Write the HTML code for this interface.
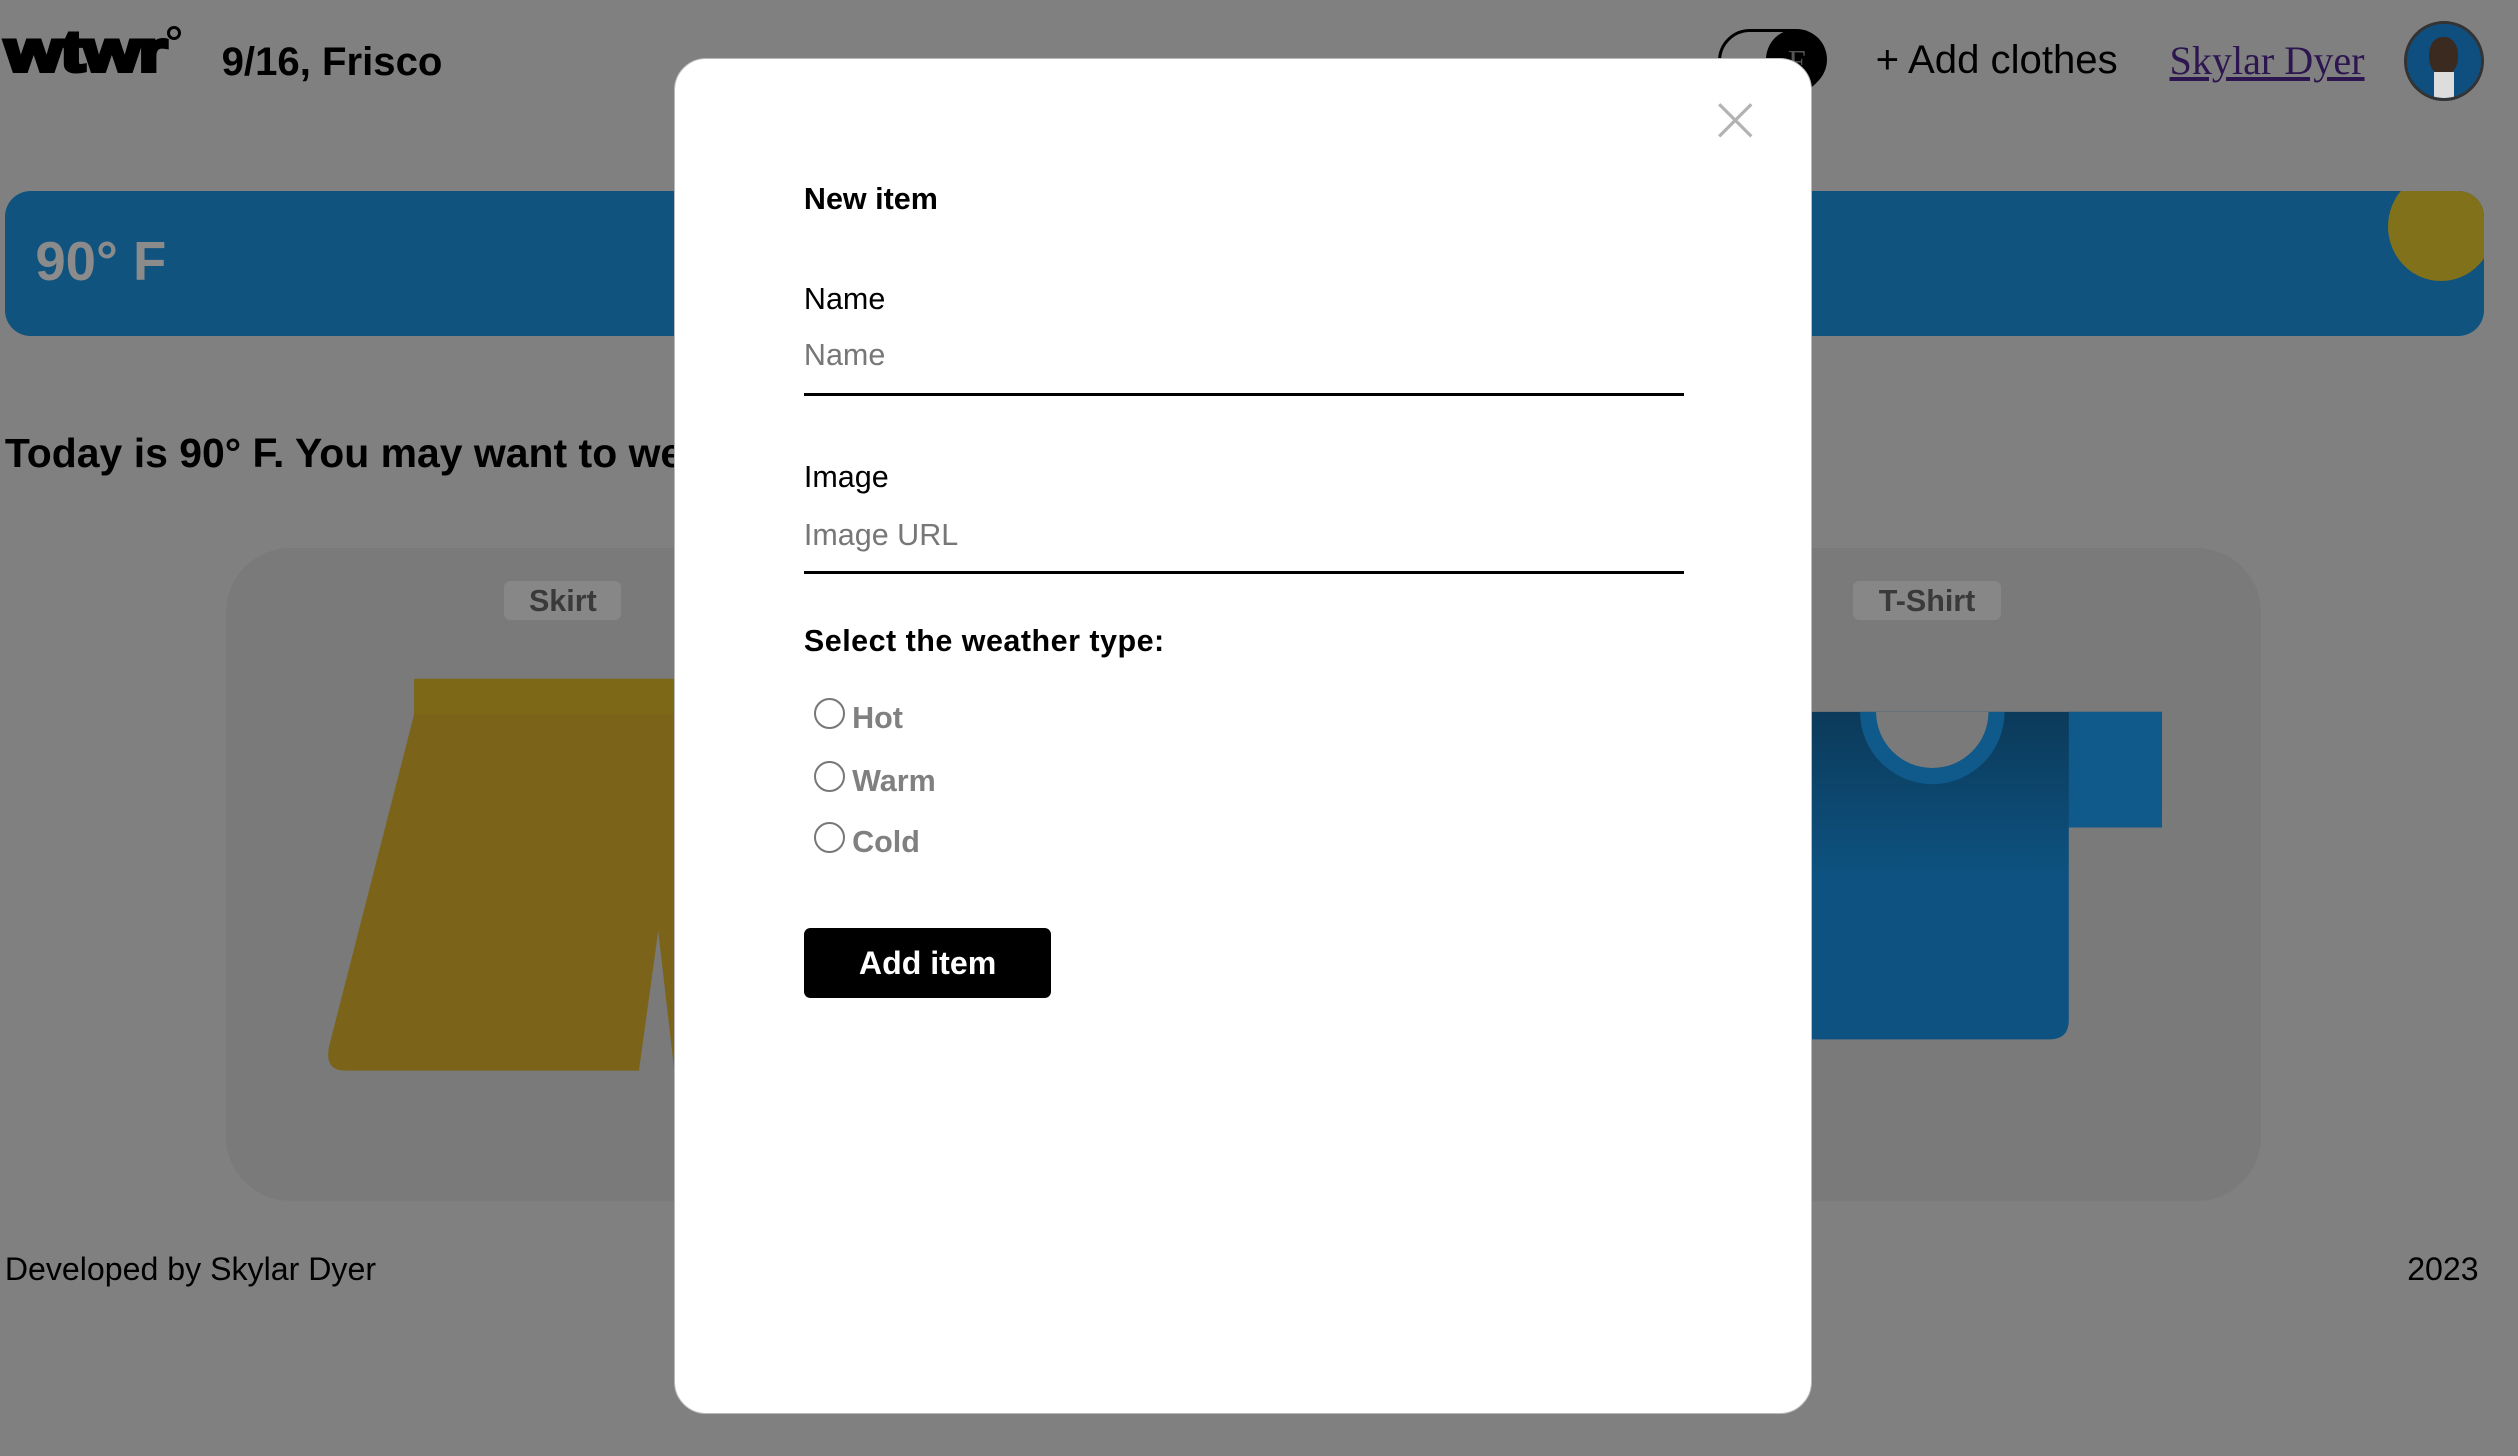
<!DOCTYPE html>
<html><head><meta charset="utf-8"><style>
html,body{margin:0;padding:0;background:#808080;overflow:hidden;width:2518px;height:1456px}
#w{zoom:1.60587;width:1568px;height:907px;position:relative;font-family:"Liberation Sans",sans-serif;color:#000}
.a{position:absolute;white-space:nowrap}
</style></head><body><div id="w">
<div class="a" style="left:3px;top:12px;font-size:36px;font-weight:bold;letter-spacing:-1px;-webkit-text-stroke:2.5px #000;transform:scaleX(1.28);transform-origin:left">wtwr</div>
<div class="a" style="left:104px;top:16px;width:5px;height:5px;border:2px solid #000;border-radius:50%"></div>
<div class="a" style="left:138px;top:24px;font-size:25px;font-weight:bold">9/16, Frisco</div>
<div class="a" style="left:1070px;top:18px;width:63px;height:36px;border:2px solid #000;border-radius:20px"></div>
<div class="a" style="left:1100px;top:18px;width:38px;height:38px;background:#000;border-radius:50%;color:#555;font-family:'Liberation Serif',serif;font-size:20px;text-align:center;line-height:40px">F</div>
<div class="a" style="left:1168px;top:23px;font-size:25px">+ Add clothes</div>
<div class="a" style="left:1351px;top:23px;font-size:25px;font-family:'Liberation Serif',serif;color:#2d1650;text-decoration:underline">Skylar Dyer</div>
<div class="a" style="left:1497px;top:13px;width:46px;height:46px;border:2px solid #333;border-radius:50%;background:#0f4f80;overflow:hidden"><div style="position:absolute;left:14px;top:8px;width:18px;height:24px;background:#3a2a20;border-radius:45%"></div><div style="position:absolute;left:17px;top:30px;width:12px;height:20px;background:#ddd"></div></div>
<div class="a" style="left:3px;top:119px;width:1544px;height:90px;background:#0f537e;border-radius:16px;overflow:hidden"><div style="position:absolute;left:1484px;top:-12px;width:66px;height:68px;border-radius:50%;background:#80711a"></div></div>
<div class="a" style="left:22px;top:143px;font-size:34px;font-weight:bold;color:#8b8b8b">90° F</div>
<div class="a" style="left:3px;top:268px;font-size:25.5px;font-weight:bold">Today is 90° F. You may want to wear:</div>
<div class="a" style="left:141px;top:341px;width:1267px;height:407px;background:#7a7a7a;border-radius:40px"></div>
<div class="a" style="left:314px;top:362px;width:73px;height:24px;background:#878787;border-radius:4px;font-size:19px;font-weight:bold;color:#3a3a3a;text-align:center;line-height:25px">Skirt</div>
<div class="a" style="left:1154px;top:362px;width:92px;height:24px;background:#878787;border-radius:4px;font-size:19px;font-weight:bold;color:#3a3a3a;text-align:center;line-height:25px">T-Shirt</div>
<svg class="a" style="left:200px;top:420px" width="240" height="250"><path d="M58 3H240V247H220L210 160L198 247H15Q2 247 5 232L58 25Z" fill="#7b6419"/><rect x="58" y="3" width="182" height="22" fill="#7d6818"/></svg>
<svg class="a" style="left:1120px;top:440px" width="230" height="210"><defs><linearGradient id="g" x1="0" y1="0" x2="0" y2="1"><stop offset="0" stop-color="#0c3a5a"/><stop offset=".5" stop-color="#0d5280"/><stop offset="1" stop-color="#0d5280"/></linearGradient></defs><path d="M0 3H226V75H168V195Q168 207 156 207H0Z" fill="url(#g)"/><rect x="168" y="3" width="58" height="72" fill="#0f5a8a"/><path d="M38 3A45 45 0 0 0 128 3Z" fill="#0f5a8a"/><path d="M48 3A35 35 0 0 0 118 3Z" fill="#7a7a7a"/></svg>
<div class="a" style="left:3px;top:779px;font-size:20px">Developed by Skylar Dyer</div>
<div class="a" style="left:1499px;top:779px;font-size:20px">2023</div>
<div class="a" style="left:420px;top:36px;width:707px;height:843px;background:#fff;border:1px solid #bbb;border-radius:20px">
 <svg style="position:absolute;left:648px;top:26px" width="24" height="24"><path d="M2 2L22 22M22 2L2 22" stroke="#b3b3b3" stroke-width="2"/></svg>
 <div class="a" style="left:80px;top:77px;font-size:19px;font-weight:bold">New item</div>
 <div class="a" style="left:80px;top:139px;font-size:19px">Name</div>
 <div class="a" style="left:80px;top:174px;font-size:19px;color:#777">Name</div>
 <div class="a" style="left:80px;top:208px;width:548px;height:2px;background:#000"></div>
 <div class="a" style="left:80px;top:250px;font-size:19px">Image</div>
 <div class="a" style="left:80px;top:286px;font-size:19px;color:#777">Image URL</div>
 <div class="a" style="left:80px;top:319px;width:548px;height:2px;background:#000"></div>
 <div class="a" style="left:80px;top:352px;font-size:19px;font-weight:bold;letter-spacing:0.3px">Select the weather type:</div>
 <div class="a" style="left:86px;top:398px;width:17px;height:17px;border:1.5px solid #777;border-radius:50%"></div>
 <div class="a" style="left:110px;top:400px;font-size:19px;font-weight:bold;color:#808080">Hot</div>
 <div class="a" style="left:86px;top:437px;width:17px;height:17px;border:1.5px solid #777;border-radius:50%"></div>
 <div class="a" style="left:110px;top:439px;font-size:19px;font-weight:bold;color:#808080">Warm</div>
 <div class="a" style="left:86px;top:475px;width:17px;height:17px;border:1.5px solid #777;border-radius:50%"></div>
 <div class="a" style="left:110px;top:477px;font-size:19px;font-weight:bold;color:#808080">Cold</div>
 <div class="a" style="left:80px;top:541px;width:154px;height:44px;background:#000;border-radius:4px;color:#fff;font-size:20px;font-weight:bold;text-align:center;line-height:44px">Add item</div>
</div>
</div></body></html>
